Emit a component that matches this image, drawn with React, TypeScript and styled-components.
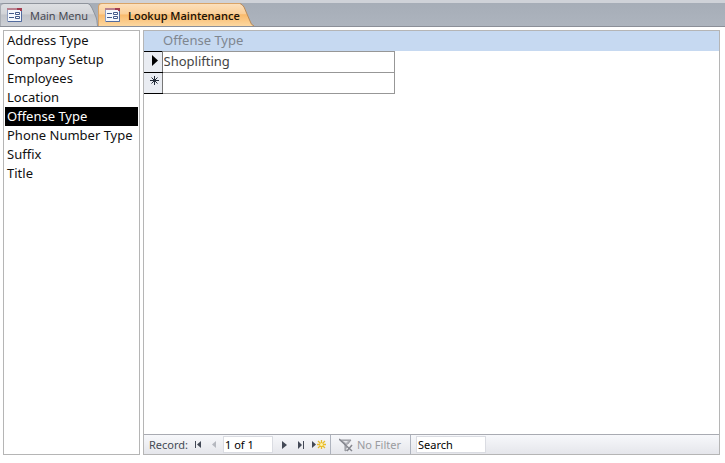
import React, { useState } from "react";
import styled, { createGlobalStyle } from "styled-components";

const Global = createGlobalStyle`
  * { box-sizing: border-box; }
  body { margin: 0; background: #fff; }
  button, input { font: inherit; color: inherit; }
`;

const Page = styled.div`
  display: flex;
  flex-direction: column;
  min-height: 100vh;
  font-family: "Noto Sans", "Open Sans", sans-serif;
  font-size: 13px;
  color: #111;
`;

const TabBar = styled.nav`
  display: flex;
  align-items: flex-end;
  height: 27px;
  border-top: 3px solid #cfd2d8;
  border-bottom: 1px solid #8b8f98;
  background: linear-gradient(#a6adb7, #adb4be);
`;

const Tab = styled.button<{ $active: boolean }>`
  display: flex;
  align-items: stretch;
  height: 23px;
  padding: 0;
  border: 0;
  background: none;
  font-family: "Open Sans", "Noto Sans", sans-serif;
  font-size: 11px;
  font-weight: ${(p) => (p.$active ? 600 : 400)};
  color: ${(p) => (p.$active ? "#1c1208" : "#3e424a")};
`;

const TabLabel = styled.span<{ $active: boolean }>`
  display: flex;
  align-items: center;
  gap: 7px;
  padding-left: 6px;
  white-space: nowrap;
  border-top: 1px solid ${(p) => (p.$active ? "#d9a468" : "#8f949c")};
  border-left: 1px solid ${(p) => (p.$active ? "#d9a468" : "#a9adb4")};
  border-top-left-radius: 4px;
  background: ${(p) =>
    p.$active
      ? "linear-gradient(#fce0bc, #fbcf98 45%, #f9ba6c 50%, #fcd7a0)"
      : "linear-gradient(#dddfe2, #d2d4d8 45%, #c0c3c9 50%, #cdd0d5)"};
`;

const Workspace = styled.main`
  flex: 1;
  display: flex;
  gap: 3px;
  padding: 3px 5px 8px 3px;
`;

const Lookups = styled.ul`
  flex: 0 0 137px;
  margin: 0;
  padding: 0 1px;
  list-style: none;
  border: 1px solid #b5b5b5;
`;

const LookupButton = styled.button<{ $selected: boolean }>`
  display: block;
  width: 100%;
  height: 19px;
  padding: 0 2px;
  border: 0;
  line-height: 19px;
  text-align: left;
  white-space: nowrap;
  background: ${(p) => (p.$selected ? "#000" : "#fff")};
  color: ${(p) => (p.$selected ? "#fff" : "#111")};
`;

const Sheet = styled.section`
  flex: 1;
  display: flex;
  flex-direction: column;
  min-width: 0;
  border: 1px solid #b5b5b5;
`;

const SheetBody = styled.div`
  flex: 1;
  background: linear-gradient(#c6d9f1 20px, #fff 20px);
`;

const Records = styled.table`
  border-collapse: collapse;
  table-layout: fixed;
  width: 251px;
`;

const HeadCell = styled.th`
  height: 20px;
  padding: 0 0 2px 1px;
  font-weight: 400;
  line-height: 18px;
  text-align: left;
  color: #7f868f;

  &:first-child { width: 18px; }
`;

const Selector = styled.td`
  height: 21px;
  padding: 1px 0 0 3px;
  vertical-align: top;
  background: #e9ecf2;
  border-top: 1px solid #000;
  border-bottom: 1px solid #000;
  border-right: 1px solid #777;
  line-height: 0;
`;

const Cell = styled.td`
  height: 21px;
  padding: 0;
  border: 1px solid #979797;
`;

const CellInput = styled.input`
  display: block;
  width: 100%;
  height: 20px;
  padding: 0 0 2px 1px;
  border: 0;
  outline: 0;
  background: transparent;
  color: #444;
`;

const Navigator = styled.footer`
  display: flex;
  align-items: stretch;
  height: 20px;
  border-top: 1px solid #a9abb2;
  background: linear-gradient(#f7f8fb, #e5e6eb);
  font-size: 11px;
  color: #444a55;
`;

const RecordGroup = styled.div`
  display: flex;
  align-items: center;
  width: 187px;
  padding-left: 5px;
  border-right: 1px solid #aeb3be;
`;

const RecordLabel = styled.label`
  width: 40px;
`;

const NavButton = styled.button<{ $width: number }>`
  display: flex;
  align-items: center;
  justify-content: center;
  width: ${(p) => p.$width}px;
  height: 18px;
  padding: 0;
  border: 0;
  background: none;
`;

const BarInput = styled.input<{ $width: number }>`
  width: ${(p) => p.$width}px;
  height: 17px;
  padding: 0 1px;
  border: 1px solid #dadce2;
  outline: 0;
  background: #fff;
  color: #000;

  &::placeholder { color: #000; opacity: 1; }
`;

const FilterButton = styled.button`
  display: flex;
  align-items: center;
  gap: 4px;
  width: 80px;
  padding: 0 0 0 8px;
  border: 0;
  border-right: 1px solid #aeb3be;
  background: none;
  color: #9a9ba0;
  white-space: nowrap;
`;

const SearchGroup = styled.div`
  display: flex;
  align-items: center;
  padding-left: 5px;
`;

const FormIcon = () => (
  <svg width="16" height="15" viewBox="0 0 16 15" aria-hidden="true">
    <path d="M.5.5h14v13H.5z" fill="#f5f8fd" stroke="#8f9fc0" />
    <path d="M0 0h15v2H0z" fill="#b8818f" />
    <path d="M10 0h5v3h-2V2h-3z" fill="#a33b4e" />
    <path d="M14.5 3v10.5H1" fill="none" stroke="#526b9e" />
    <path d="M2 5.5h5M2 9.5h5" stroke="#445b8b" />
    <path d="M8.5 4.5h4v2h-4zM8.5 8.5h4v2h-4z" fill="#fff" stroke="#445b8b" />
  </svg>
);

const TabEnd = ({ active }: { active: boolean }) => {
  const id = active ? "end-active" : "end-idle";
  const colors = active
    ? ["#fce0bc", "#fbcf98", "#f9ba6c", "#fcd7a0"]
    : ["#dddfe2", "#d2d4d8", "#c0c3c9", "#cdd0d5"];
  const width = active ? 14 : 10;
  const shape = active
    ? "M0 .5Q2 1 4 4L10 18Q11 22 14 23"
    : "M0 .5Q2 1 4 5L8 14Q9 16 9.5 23";
  return (
    <svg width={width} height="23" viewBox={`0 0 ${width} 23`} aria-hidden="true">
      <defs>
        <linearGradient id={id} x1="0" y1="0" x2="0" y2="1">
          <stop offset="0" stopColor={colors[0]} />
          <stop offset=".45" stopColor={colors[1]} />
          <stop offset=".5" stopColor={colors[2]} />
          <stop offset="1" stopColor={colors[3]} />
        </linearGradient>
      </defs>
      <path d={`${shape}H0Z`} fill={`url(#${id})`} />
      <path d={shape} fill="none" stroke={active ? "#b98a58" : "#8f949c"} />
    </svg>
  );
};

const CurrentIcon = () => (
  <svg width="12" height="14" viewBox="0 0 12 14" aria-hidden="true">
    <path d="M5 2L11 7.5 5 13Z" fill="#000" />
  </svg>
);

const NewIcon = () => (
  <svg width="14" height="14" viewBox="0 0 14 14" aria-hidden="true">
    <path d="M7.5 2v9M3 6.5h9M4.5 3.5l6 6M10.5 3.5l-6 6" stroke="#222b38" />
  </svg>
);

const FirstIcon = () => (
  <svg width="8" height="8" viewBox="0 0 8 8" aria-hidden="true">
    <path d="M1.5 0v7" stroke="#434956" />
    <path d="M7 0v7L3 3.5Z" fill="#434956" />
  </svg>
);

const PreviousIcon = () => (
  <svg width="5" height="8" viewBox="0 0 5 8" aria-hidden="true">
    <path d="M4 0v7L0 3.5Z" fill="#b5b8bf" />
  </svg>
);

const NextIcon = () => (
  <svg width="5" height="8" viewBox="0 0 5 8" aria-hidden="true">
    <path d="M0 0v8L5 4Z" fill="#434956" />
  </svg>
);

const LastIcon = () => (
  <svg width="7" height="8" viewBox="0 0 7 8" aria-hidden="true">
    <path d="M0 0v8L4 4Z" fill="#434956" />
    <path d="M5.5 0v8" stroke="#434956" />
  </svg>
);

const AddIcon = () => (
  <svg width="14" height="9" viewBox="0 0 14 9" aria-hidden="true">
    <path d="M0 1v7L4 4.5Z" fill="#434956" />
    <path
      d="M9.5 0v9M5 4.5h9M6 1l7 7M13 1L6 8"
      stroke="#e9bd2c"
      strokeWidth="1.3"
    />
    <circle cx="9.5" cy="4.5" r="1.5" fill="#fff3a8" />
  </svg>
);

const NoFilterIcon = () => (
  <svg width="14" height="14" viewBox="0 0 14 14" aria-hidden="true">
    <path d="M1 2h11L8 7v5l-2 1V7Z" fill="#b3b4ba" stroke="#94969c" />
    <path d="M4 3h5L7 5Z" fill="#e7e8ec" />
    <path d="M8 7l5 5M13 7l-5 5" stroke="#f0f0f3" strokeWidth="3" />
    <path d="M0 1l13 12M13 7l-5 6" stroke="#85878f" strokeWidth="1.5" />
  </svg>
);

const tabs = ["Main Menu", "Lookup Maintenance"];
const lookups = [
  "Address Type",
  "Company Setup",
  "Employees",
  "Location",
  "Offense Type",
  "Phone Number Type",
  "Suffix",
  "Title",
];

export default function App() {
  const [tab, setTab] = useState("Lookup Maintenance");
  const [lookup, setLookup] = useState("Offense Type");

  return (
    <Page>
      <Global />
      <TabBar>
        {tabs.map((name) => (
          <Tab key={name} $active={name === tab} onClick={() => setTab(name)}>
            <TabLabel $active={name === tab}>
              <FormIcon />
              {name}
            </TabLabel>
            <TabEnd active={name === tab} />
          </Tab>
        ))}
      </TabBar>
      <Workspace>
        <Lookups>
          {lookups.map((name) => (
            <li key={name}>
              <LookupButton $selected={name === lookup} onClick={() => setLookup(name)}>
                {name}
              </LookupButton>
            </li>
          ))}
        </Lookups>
        <Sheet>
          <SheetBody>
            <Records>
              <thead>
                <tr>
                  <HeadCell />
                  <HeadCell scope="col">{lookup}</HeadCell>
                </tr>
              </thead>
              <tbody>
                <tr>
                  <Selector><CurrentIcon /></Selector>
                  <Cell><CellInput aria-label={lookup} defaultValue="Shoplifting" /></Cell>
                </tr>
                <tr>
                  <Selector><NewIcon /></Selector>
                  <Cell><CellInput aria-label={`New ${lookup}`} /></Cell>
                </tr>
              </tbody>
            </Records>
          </SheetBody>
          <Navigator>
            <RecordGroup>
              <RecordLabel htmlFor="record">Record:</RecordLabel>
              <NavButton $width={17} aria-label="First record"><FirstIcon /></NavButton>
              <NavButton $width={17} aria-label="Previous record" disabled><PreviousIcon /></NavButton>
              <BarInput $width={50} id="record" defaultValue="1 of 1" />
              <NavButton $width={22} aria-label="Next record"><NextIcon /></NavButton>
              <NavButton $width={13} aria-label="Last record"><LastIcon /></NavButton>
              <NavButton $width={21} aria-label="New record"><AddIcon /></NavButton>
            </RecordGroup>
            <FilterButton><NoFilterIcon />No Filter</FilterButton>
            <SearchGroup>
              <BarInput $width={70} aria-label="Search" placeholder="Search" />
            </SearchGroup>
          </Navigator>
        </Sheet>
      </Workspace>
    </Page>
  );
}
